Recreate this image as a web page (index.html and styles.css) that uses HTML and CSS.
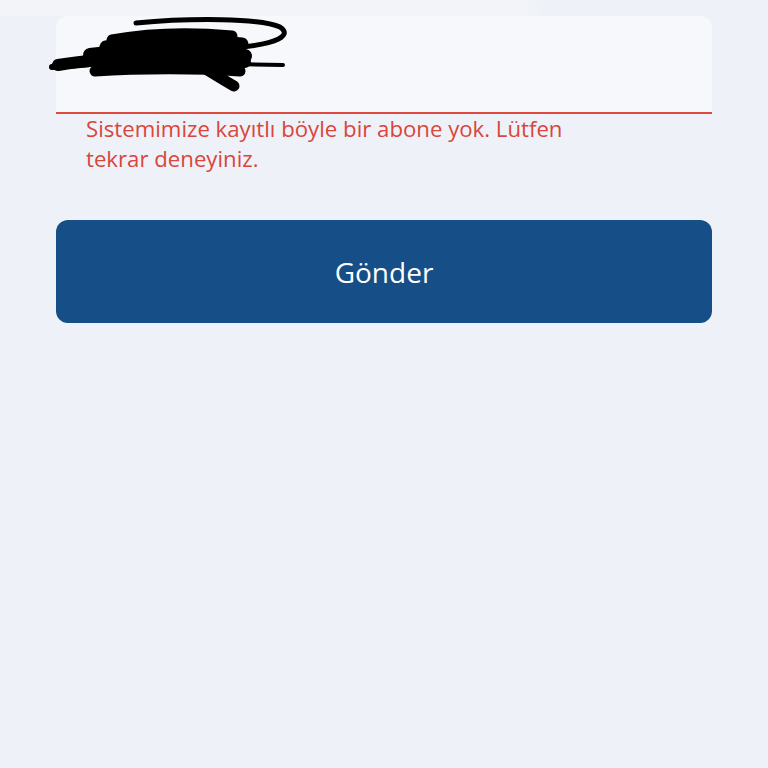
FILE: index.html
```html
<!DOCTYPE html>
<html lang="tr">
<head>
<meta charset="utf-8">
<link rel="stylesheet" href="styles.css">
</head>
<body>
<div class="page">
  <div class="field">
    <svg class="scribble" width="300" height="100" viewBox="0 0 300 100">
      <g fill="none" stroke="#000" stroke-linecap="round" stroke-linejoin="round">
        <path d="M136 23 C 190 18, 262 18, 280 27 C 292 35, 280 44, 232 48" stroke-width="5"/>
        <path d="M112 40 C 150 33, 190 32, 232 36" stroke-width="11"/>
        <path d="M106 47 C 150 40, 200 39, 242 44" stroke-width="13"/>
        <path d="M90 55 C 140 48, 200 46, 245 56" stroke-width="14"/>
        <path d="M58 65 C 100 58, 160 55, 245 62" stroke-width="12"/>
        <path d="M95 71 C 140 68, 200 68, 240 71" stroke-width="11"/>
        <path d="M110 61 C 150 56, 200 58, 238 64" stroke-width="16"/>
        <path d="M198 64 C 212 73, 224 80, 234 86" stroke-width="11"/>
        <path d="M235 64 L 283 65" stroke-width="4"/>
        <path d="M52 67 L 90 64" stroke-width="6"/>
      </g>
    </svg>
  </div>
  <p class="error">Sistemimize kayıtlı böyle bir abone yok. Lütfen<br>tekrar deneyiniz.</p>
  <button class="submit" type="button">Gönder</button>
</div>
</body>
</html>
```
FILE: styles.css
```css
html, body {
  margin: 0;
  padding: 0;
  background: #eef1f8;
  font-family: "Open Sans", "Noto Sans", sans-serif;
}
.page {
  width: 768px;
  height: 768px;
  padding: 16px 56px 0;
  box-sizing: border-box;
  display: flex;
  flex-direction: column;
  position: relative;
  background: linear-gradient(100deg, #f2f4f9 0, #f2f4f9 520px, #eef1f8 540px) top / 100% 16px no-repeat, #eef1f8;
}
.field {
  height: 96px;
  background: #f6f8fc;
  border-radius: 12px 12px 0 0;
  border-bottom: 2px solid #de4a3e;
}
.scribble {
  position: absolute;
  left: 0;
  top: 0;
}
.error {
  margin: 0 0 0 30px;
  color: #d9463b;
  font-size: 22.2px;
  line-height: 30px;
}
.submit {
  margin-top: 46px;
  height: 103px;
  border: none;
  border-radius: 12px;
  background: #164f87;
  color: #ffffff;
  font-family: "Open Sans", "Noto Sans", sans-serif;
  font-size: 28px;
  padding: 0;
}
```
